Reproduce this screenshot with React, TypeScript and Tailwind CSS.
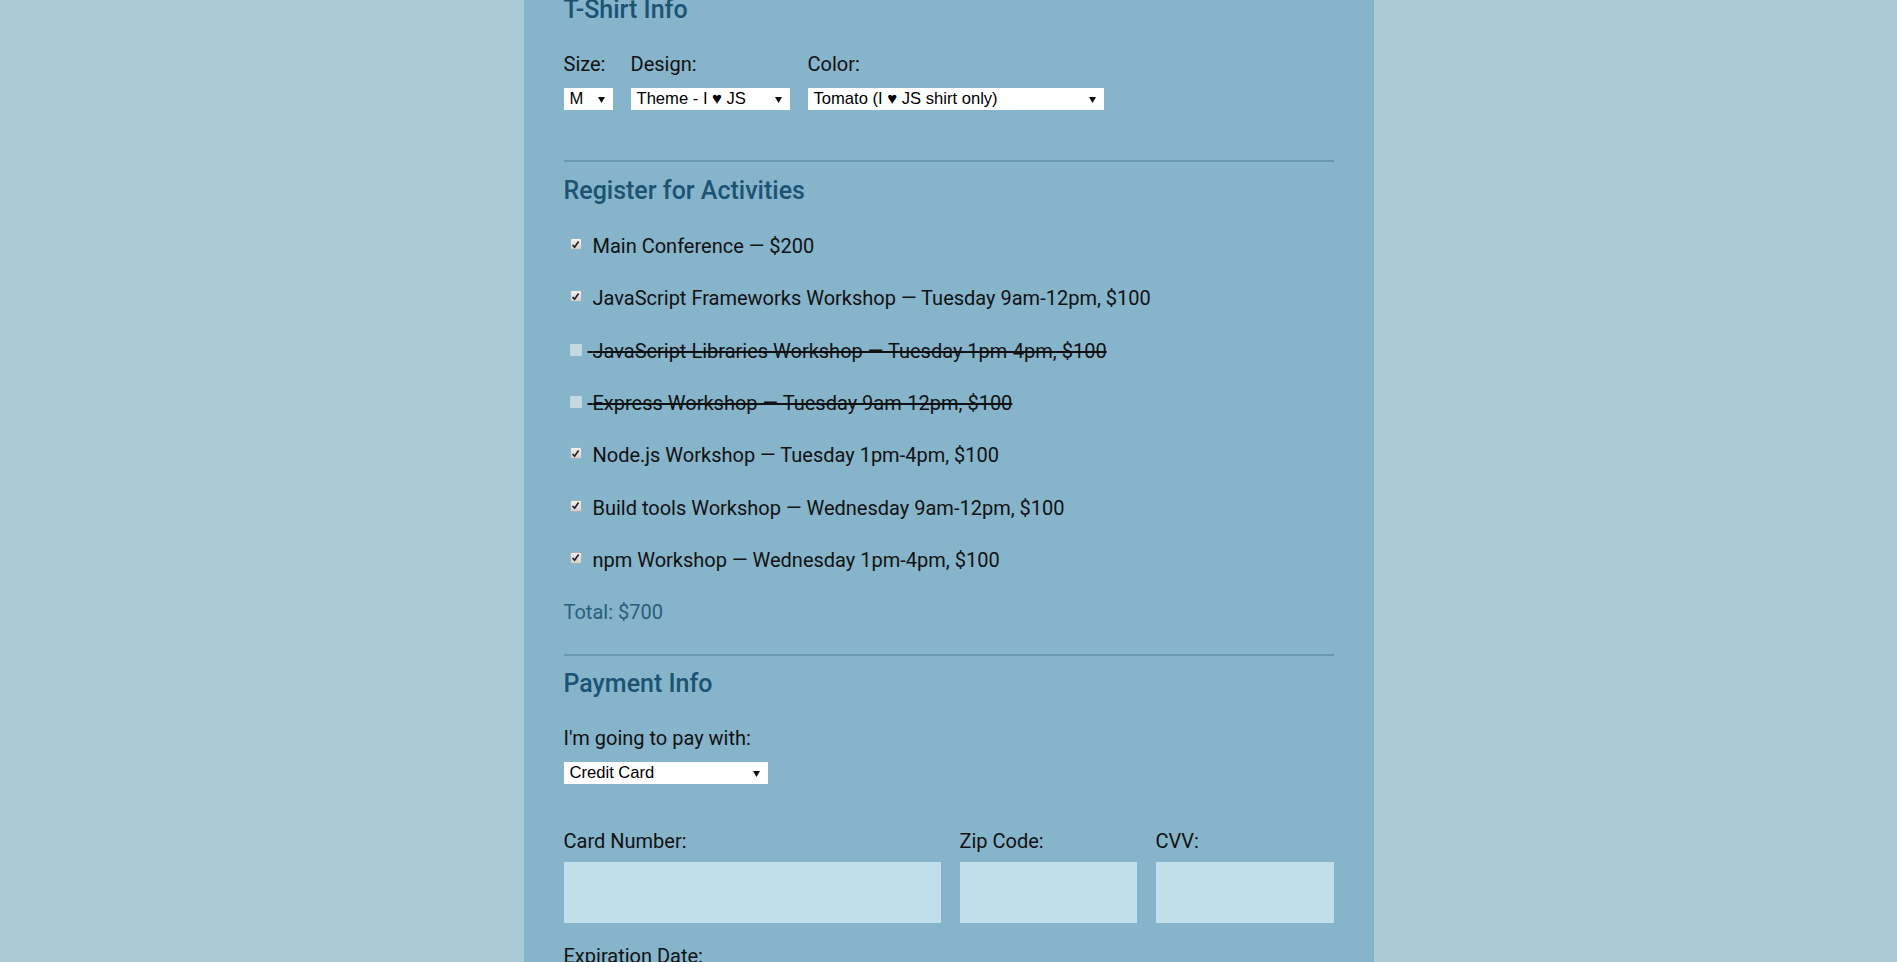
import type { ReactNode } from "react"

const activities = [
  { text: "Main Conference — $200", checked: true, disabled: false },
  { text: "JavaScript Frameworks Workshop — Tuesday 9am-12pm, $100", checked: true, disabled: false },
  { text: "JavaScript Libraries Workshop — Tuesday 1pm-4pm, $100", checked: false, disabled: true },
  { text: "Express Workshop — Tuesday 9am-12pm, $100", checked: false, disabled: true },
  { text: "Node.js Workshop — Tuesday 1pm-4pm, $100", checked: true, disabled: false },
  { text: "Build tools Workshop — Wednesday 9am-12pm, $100", checked: true, disabled: false },
  { text: "npm Workshop — Wednesday 1pm-4pm, $100", checked: true, disabled: false },
]

function Arrow() {
  return (
    <svg width="7" height="7" viewBox="0 0 7 7" className="shrink-0">
      <polygon points="0,1 7,1 3.5,7" fill="#111" />
    </svg>
  )
}

function FakeSelect({ value, width }: { value: ReactNode; width: string }) {
  return (
    <div
      className={`${width} h-[22px] bg-white flex items-center justify-between pl-[6px] pr-[8px] text-[16.6px] leading-none text-black font-['Liberation_Sans',Arial,sans-serif]`}
    >
      <span className="whitespace-nowrap">{value}</span>
      <Arrow />
    </div>
  )
}

function Checkbox({ checked, disabled }: { checked: boolean; disabled: boolean }) {
  if (disabled) {
    return <span className="ml-[6px] mr-[6px] mb-[2px] w-[12px] h-[12px] shrink-0 rounded-[1px] bg-[#c6dae3]" />
  }
  return (
    <span className="ml-[6px] mr-[6px] mb-[4px] w-[12px] h-[12px] shrink-0 rounded-[2px] border border-[#9fb3bd] bg-gradient-to-b from-[#f2f2f2] to-[#d2d2d2] flex items-center justify-center">
      {checked && (
        <svg width="9" height="9" viewBox="0 0 9 9">
          <path d="M1.5 5 L3.6 7.2 L7.6 1.6" stroke="#222" strokeWidth="1.7" fill="none" />
        </svg>
      )}
    </span>
  )
}

function SectionTitle({ children }: { children: ReactNode }) {
  return <h2 className="h-[30px] leading-[30px] text-[25px] font-medium text-[#1c5373]">{children}</h2>
}

function Divider() {
  return <div className="h-[2px] bg-[#6898b2]" />
}

export default function App() {
  return (
    <div className="bg-[#aacad7] font-['Roboto',sans-serif] text-[20px] text-[#111] overflow-hidden h-[962px]">
      <div className="mx-auto w-[850px] h-full bg-[#85b4cb] px-10 flex flex-col">
        {/* T-Shirt */}
        <div className="-mt-[5px]">
          <SectionTitle>T-Shirt Info</SectionTitle>
        </div>
        <div className="mt-[27px] flex gap-[18px]">
          <div className="flex flex-col gap-[12px]">
            <span className="h-[24px] leading-[24px]">Size:</span>
            <FakeSelect value="M" width="w-[49px]" />
          </div>
          <div className="flex flex-col gap-[12px]">
            <span className="h-[24px] leading-[24px]">Design:</span>
            <FakeSelect value="Theme - I ♥ JS" width="w-[159px]" />
          </div>
          <div className="flex flex-col gap-[12px]">
            <span className="h-[24px] leading-[24px]">Color:</span>
            <FakeSelect value="Tomato (I ♥ JS shirt only)" width="w-[296px]" />
          </div>
        </div>

        <div className="mt-[50px]">
          <Divider />
        </div>

        {/* Activities */}
        <div className="mt-[14px]">
          <SectionTitle>Register for Activities</SectionTitle>
        </div>
        <div className="mt-[14px] flex flex-col">
          {activities.map((a) => (
            <label key={a.text} className="h-[52.3px] flex items-center">
              <Checkbox checked={a.checked} disabled={a.disabled} />
              <span className={a.disabled ? "line-through decoration-[#111]" : ""}>
                {"\u00a0"}
                {a.text}
              </span>
            </label>
          ))}
          <p className="h-[52px] leading-[52px] text-[#2a5e7a]">Total: $700</p>
        </div>

        <div className="mt-[16px]">
          <Divider />
        </div>

        {/* Payment */}
        <div className="mt-[13px]">
          <SectionTitle>Payment Info</SectionTitle>
        </div>
        <span className="mt-[27px] h-[24px] leading-[24px]">I'm going to pay with:</span>
        <div className="mt-[12px]">
          <FakeSelect value="Credit Card" width="w-[204px]" />
        </div>

        <div className="mt-[45px] flex gap-[19px]">
          <div className="w-[377px] flex flex-col gap-[9px]">
            <span className="h-[24px] leading-[24px]">Card Number:</span>
            <div className="h-[61px] bg-[#c1dfea]" />
          </div>
          <div className="w-[177px] flex flex-col gap-[9px]">
            <span className="h-[24px] leading-[24px]">Zip Code:</span>
            <div className="h-[61px] bg-[#c1dfea]" />
          </div>
          <div className="flex-1 flex flex-col gap-[9px]">
            <span className="h-[24px] leading-[24px]">CVV:</span>
            <div className="h-[61px] bg-[#c1dfea]" />
          </div>
        </div>

        <span className="mt-[21px] h-[24px] leading-[24px]">Expiration Date:</span>
      </div>
    </div>
  )
}
